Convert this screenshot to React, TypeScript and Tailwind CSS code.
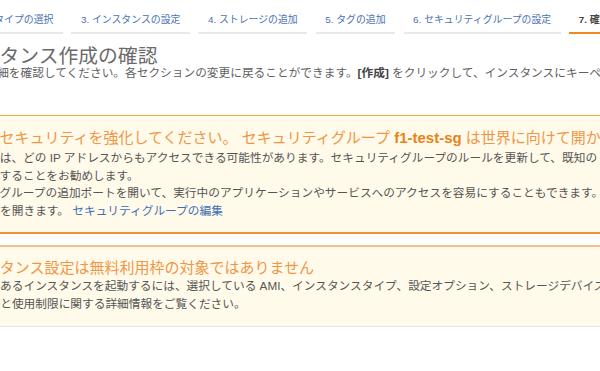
const tabs = [
  { label: '1. AMI の選択', active: false },
  { label: '2. インスタンスタイプの選択', active: false },
  { label: '3. インスタンスの設定', active: false },
  { label: '4. ストレージの追加', active: false },
  { label: '5. タグの追加', active: false },
  { label: '6. セキュリティグループの設定', active: false },
  { label: '7. 確認', active: true },
];

const App: React.FC = () => {
  return (
    <div className="h-[371px] w-[600px] overflow-hidden bg-white font-['Liberation_Sans','Noto_Sans_CJK_JP',sans-serif]">
      <div className="-ml-[173px] w-[1200px]">
        {/* Wizard steps */}
        <nav className="flex gap-[8.5px]">
          {tabs.map((tab) => (
            <div
              key={tab.label}
              className={`whitespace-nowrap border-b-2 px-[9.5px] pt-[13px] pb-[6px] text-[9.9px] leading-[13px] ${
                tab.active
                  ? 'border-[#f08a1c] font-bold text-[#444]'
                  : 'border-[#e8e8e8] text-[#4a72b0]'
              }`}
            >
              {tab.label}
            </div>
          ))}
        </nav>

        <div className="pl-[7px]">
          <h1 className="mt-[11px] whitespace-nowrap text-[19.8px] leading-[22px] text-[#6b6b6b]">
            ステップ 7: インスタンス作成の確認
          </h1>
          <p className="whitespace-nowrap text-[11.7px] leading-[12px] text-[#5f5f5f]">
            インスタンスの作成に関する詳細を確認してください。各セクションの変更に戻ることができます。
            <b className="text-[#444]">[作成]</b>{' '}
            をクリックして、インスタンスにキーペアを割り当て、作成処理を完了します。
          </p>

          {/* Security warning */}
          <div className="mt-[36px] border-t border-b-2 border-t-[#f3aa55] border-b-[#ef9330] bg-[#fffae9] pt-[13px] pb-[13px] pl-[61px]">
            <div className="whitespace-nowrap text-[15px] leading-[18px] text-[#ef9646]">
              インスタンスのセキュリティを強化してください。 セキュリティグループ{' '}
              <b className="text-[#e8821a]">f1-test-sg</b> は世界に向けて開かれています。
            </div>
            <div className="mt-[2px] whitespace-nowrap text-[11.7px] leading-[17.5px] text-[#555]">
              <div>
                現在のインスタンスは、どの IP
                アドレスからもアクセスできる可能性があります。セキュリティグループのルールを更新して、既知の
                IP アドレスからのみ
              </div>
              <div>アクセス範囲を制限することをお勧めします。</div>
              <div>
                また、セキュリティグループの追加ポートを開いて、実行中のアプリケーションやサービスへのアクセスを容易にすることもできます。たとえば、ウェブ
              </div>
              <div>
                サーバー用のポートを開きます。{' '}
                <a className="text-[#3f6eb5]">セキュリティグループの編集</a>
              </div>
            </div>
          </div>

          {/* Free tier warning */}
          <div className="mt-[11px] border-t-2 border-b border-t-[#f5bf8c] border-b-[#e5e5e5] bg-[#fffae9] pt-[12px] pb-[13px] pl-[61px]">
            <div className="whitespace-nowrap text-[15px] leading-[18px] text-[#ef9646]">
              お使いのインスタンス設定は無料利用枠の対象ではありません
            </div>
            <div className="whitespace-nowrap text-[11.7px] leading-[18px] text-[#555]">
              <div>
                無料利用枠の対象であるインスタンスを起動するには、選択している
                AMI、インスタンスタイプ、設定オプション、ストレージデバイスを確認して
              </div>
              <div>ください。使用資格と使用制限に関する詳細情報をご覧ください。</div>
            </div>
          </div>
        </div>
      </div>
    </div>
  );
};

export default App;
